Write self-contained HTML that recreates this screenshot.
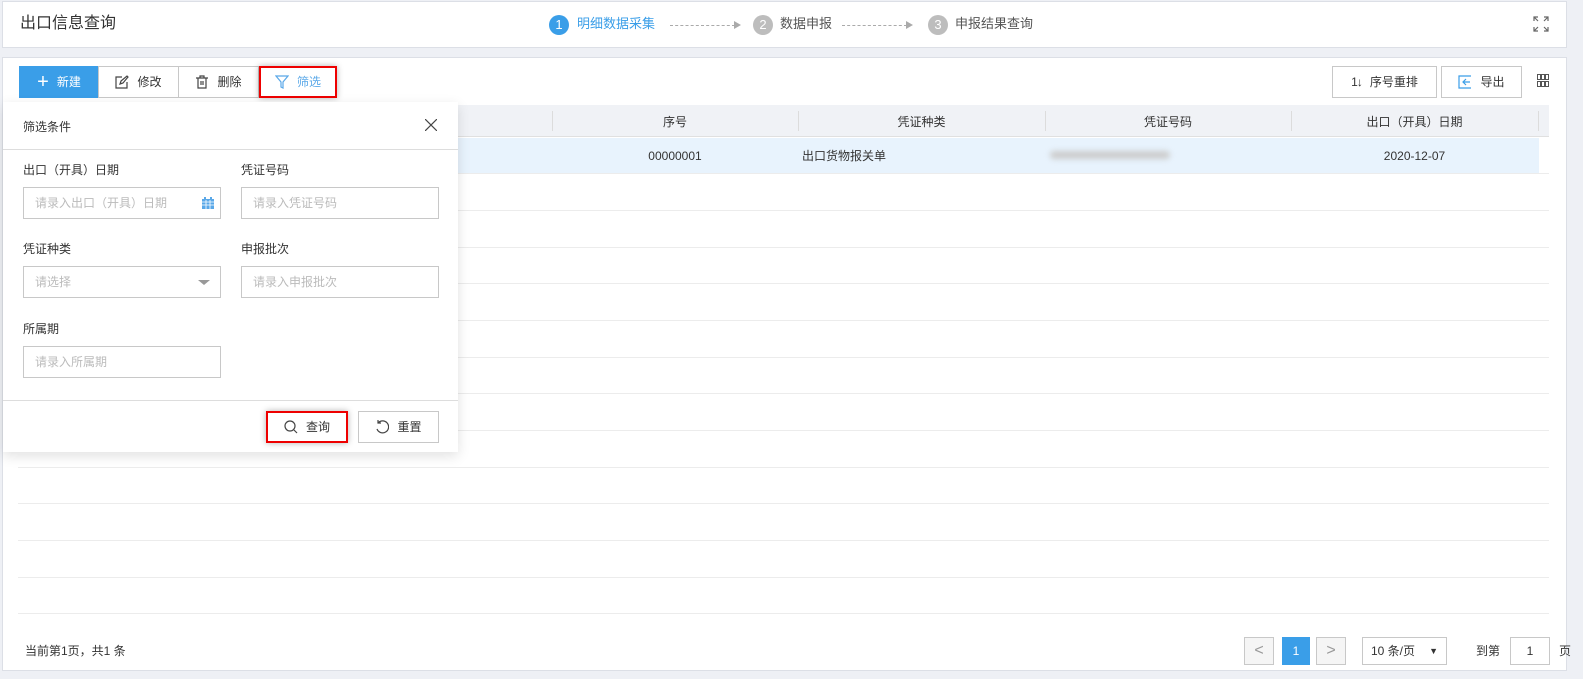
<!DOCTYPE html>
<html><head><meta charset="utf-8"><style>
*{box-sizing:border-box;margin:0;padding:0}
body{width:1583px;height:679px;background:#eef0f5;font-family:"Liberation Sans","Noto Sans CJK SC",sans-serif;font-size:12px;line-height:14px;color:#333;position:relative;overflow:hidden}
.abs{position:absolute}
.top{left:2px;top:1px;width:1565px;height:47px;background:#fff;border:1px solid #dcdfe6}
.main{left:2px;top:57px;width:1565px;height:614px;background:#fff;border:1px solid #dcdfe6}
.circ{width:20px;height:20px;border-radius:50%;color:#fff;font-size:13px;text-align:center;line-height:20px}
.btn{height:32px;border:1px solid #c8c8c8;background:#fff;display:flex;align-items:center;justify-content:center;font-size:12px;gap:8px}
.th{top:105px;height:32px;left:18px;width:1531px;background:#f0f2f6;border-bottom:1px solid #e0e0e0}
.sep{width:1px;height:20px;background:#dcdcdc;top:111px}
.row{left:18px;width:1531px;height:1px;background:#ececec}
.inp{height:32px;border:1px solid #c8c8c8;background:#fff;color:#bbb;padding-left:11px;line-height:30px;font-size:12px}
.lbl{font-size:12px;color:#333}
</style></head><body>
<div class="abs top"></div>
<div class="abs" style="left:20px;top:15px;font-size:16px;line-height:18px;color:#333">出口信息查询</div>
<div class="abs circ" style="left:549px;top:15px;background:#3a9ee8">1</div>
<div class="abs" style="left:577px;top:17px;font-size:13px;color:#3a9ee8">明细数据采集</div>
<div class="abs" style="left:670px;top:25px;width:65px;border-top:1px dashed #aaa"></div>
<div class="abs" style="left:734px;top:21px;border-left:7px solid #aaa;border-top:4px solid transparent;border-bottom:4px solid transparent"></div>
<div class="abs circ" style="left:753px;top:15px;background:#bdbdbd">2</div>
<div class="abs" style="left:780px;top:17px;font-size:13px;color:#555">数据申报</div>
<div class="abs" style="left:842px;top:25px;width:65px;border-top:1px dashed #aaa"></div>
<div class="abs" style="left:906px;top:21px;border-left:7px solid #aaa;border-top:4px solid transparent;border-bottom:4px solid transparent"></div>
<div class="abs circ" style="left:928px;top:15px;background:#bdbdbd">3</div>
<div class="abs" style="left:955px;top:17px;font-size:13px;color:#555">申报结果查询</div>
<svg class="abs" style="left:1533px;top:16px" width="16" height="16" viewBox="0 0 16 16" fill="none" stroke="#666" stroke-width="1.2"><path d="M1 5V1h4M1 1l4 4M15 5V1h-4M15 1l-4 4M1 11v4h4M1 15l4-4M15 11v4h-4M15 15l-4-4"/></svg>

<div class="abs main"></div>
<div class="abs btn" style="left:19px;top:66px;width:80px;background:#3a9ee8;border-color:#3a9ee8;color:#fff"><span style="font-size:20px;font-weight:300">+</span>新建</div>
<div class="abs btn" style="left:98px;top:66px;width:81px"><svg width="14" height="14" viewBox="0 0 14 14" fill="none" stroke="#444" stroke-width="1.2"><path d="M7 2H1v11h11V7M5 9l1-3 6-5 1 1-5 6z"/></svg>修改</div>
<div class="abs btn" style="left:178px;top:66px;width:81px"><svg width="14" height="14" viewBox="0 0 14 14" fill="none" stroke="#444" stroke-width="1.2"><path d="M1 3h12M5 3V1h4v2M3 3v10h8V3M6 6v4M8 6v4"/></svg>删除</div>
<div class="abs btn" style="left:259px;top:66px;width:78px;color:#5aa8e8;border:2px solid #e00;box-shadow:0 0 6px rgba(0,0,0,.3)"><svg width="14" height="14" viewBox="0 0 14 14" fill="none" stroke="#5aa8e8" stroke-width="1.2"><path d="M1 1h12L8 7v6L6 12V7z"/></svg>筛选</div>
<div class="abs btn" style="left:1332px;top:66px;width:105px"><span style="letter-spacing:-1px">1↓</span>序号重排</div>
<div class="abs btn" style="left:1441px;top:66px;width:81px"><svg width="14" height="14" viewBox="0 0 14 14" fill="none" stroke="#3a9ee8" stroke-width="1.2"><path d="M13 1H1v12h12M12 7H5M8 4L5 7l3 3"/></svg>导出</div>
<svg class="abs" style="left:1537px;top:74px" width="12" height="14" viewBox="0 0 12 14" fill="none" stroke="#555"><rect x=".5" y=".5" width="3" height="5"/><rect x="4.5" y=".5" width="3" height="5"/><rect x="8.5" y=".5" width="3" height="5"/><rect x=".5" y="7.5" width="3" height="5"/><rect x="4.5" y="7.5" width="3" height="5"/><rect x="8.5" y="7.5" width="3" height="5"/></svg>

<div class="abs th"></div>
<div class="abs sep" style="left:552px"></div><div class="abs sep" style="left:798px"></div><div class="abs sep" style="left:1045px"></div><div class="abs sep" style="left:1291px"></div><div class="abs sep" style="left:1538px"></div>
<div class="abs" style="left:552px;width:246px;top:115px;text-align:center">序号</div>
<div class="abs" style="left:798px;width:247px;top:115px;text-align:center">凭证种类</div>
<div class="abs" style="left:1045px;width:246px;top:115px;text-align:center">凭证号码</div>
<div class="abs" style="left:1291px;width:247px;top:115px;text-align:center">出口（开具）日期</div>
<div class="abs" style="left:18px;top:138px;width:1521px;height:35px;background:#e8f3fd"></div>
<div class="abs" style="left:552px;width:246px;top:149px;text-align:center">00000001</div>
<div class="abs" style="left:802px;top:149px">出口货物报关单</div>
<div class="abs" style="left:1050px;top:151px;width:120px;height:8px;background:#ccc;filter:blur(3px);border-radius:5px"></div>
<div class="abs" style="left:1291px;width:247px;top:149px;text-align:center">2020-12-07</div>
<div class="abs row" style="top:173px"></div><div class="abs row" style="top:210px"></div><div class="abs row" style="top:247px"></div><div class="abs row" style="top:283px"></div><div class="abs row" style="top:320px"></div><div class="abs row" style="top:357px"></div><div class="abs row" style="top:393px"></div><div class="abs row" style="top:430px"></div><div class="abs row" style="top:467px"></div><div class="abs row" style="top:503px"></div><div class="abs row" style="top:540px"></div><div class="abs row" style="top:577px"></div><div class="abs row" style="top:613px"></div>

<div class="abs" style="left:25px;top:644px">当前第1页，共1 条</div>
<div class="abs btn" style="left:1244px;top:637px;width:30px;height:28px;background:#f5f5f5;color:#999;font-size:16px">&lt;</div>
<div class="abs btn" style="left:1282px;top:637px;width:28px;height:28px;background:#3a9ee8;border-color:#3a9ee8;color:#fff">1</div>
<div class="abs btn" style="left:1316px;top:637px;width:30px;height:28px;background:#f5f5f5;color:#999;font-size:16px">&gt;</div>
<div class="abs btn" style="left:1362px;top:637px;width:85px;height:28px;justify-content:space-between;padding:0 8px">10 条/页<span style="font-size:9px">▼</span></div>
<div class="abs" style="left:1476px;top:644px">到第</div>
<div class="abs btn" style="left:1510px;top:637px;width:40px;height:28px">1</div>
<div class="abs" style="left:1559px;top:644px">页</div>

<div class="abs" style="left:3px;top:102px;width:455px;height:350px;background:#fff;box-shadow:0 4px 12px rgba(0,0,0,.12)"></div>
<div class="abs" style="left:23px;top:120px;font-size:12px">筛选条件</div>
<svg class="abs" style="left:425px;top:119px" width="12" height="12" viewBox="0 0 12 12" stroke="#444" stroke-width="1.2"><path d="M0 0l12 12M12 0L0 12"/></svg>
<div class="abs" style="left:3px;top:149px;width:455px;height:1px;background:#ddd"></div>
<div class="abs lbl" style="left:23px;top:163px">出口（开具）日期</div>
<div class="abs lbl" style="left:241px;top:163px">凭证号码</div>
<div class="abs inp" style="left:23px;top:187px;width:198px">请录入出口（开具）日期<svg style="position:absolute;right:6px;top:9px" width="12" height="12" viewBox="0 0 12 12"><rect x="0" y="2" width="12" height="10" fill="#5aa8e8"/><rect x="2" y="0" width="2" height="3" fill="#5aa8e8"/><rect x="8" y="0" width="2" height="3" fill="#5aa8e8"/><path d="M0 5h12M0 8h12M4 3v9M8 3v9" stroke="#fff" stroke-width=".8"/></svg></div>
<div class="abs inp" style="left:241px;top:187px;width:198px">请录入凭证号码</div>
<div class="abs lbl" style="left:23px;top:242px">凭证种类</div>
<div class="abs lbl" style="left:241px;top:242px">申报批次</div>
<div class="abs inp" style="left:23px;top:266px;width:198px">请选择<span style="position:absolute;right:10px;top:13px;border-top:5px solid #999;border-left:6px solid transparent;border-right:6px solid transparent"></span></div>
<div class="abs inp" style="left:241px;top:266px;width:198px">请录入申报批次</div>
<div class="abs lbl" style="left:23px;top:322px">所属期</div>
<div class="abs inp" style="left:23px;top:346px;width:198px">请录入所属期</div>
<div class="abs" style="left:3px;top:400px;width:455px;height:1px;background:#ddd"></div>
<div class="abs btn" style="left:266px;top:411px;width:82px;border:2px solid #e00;box-shadow:0 0 6px rgba(0,0,0,.3)"><svg width="14" height="14" viewBox="0 0 14 14" fill="none" stroke="#444" stroke-width="1.2"><circle cx="6" cy="6" r="5"/><path d="M10 10l3 3"/></svg>查询</div>
<div class="abs btn" style="left:358px;top:411px;width:81px"><svg width="14" height="14" viewBox="0 0 14 14" fill="none" stroke="#444" stroke-width="1.2"><path d="M3 3a6 6 0 1 1-1 6M3 0v3h3"/></svg>重置</div>
</body></html>
